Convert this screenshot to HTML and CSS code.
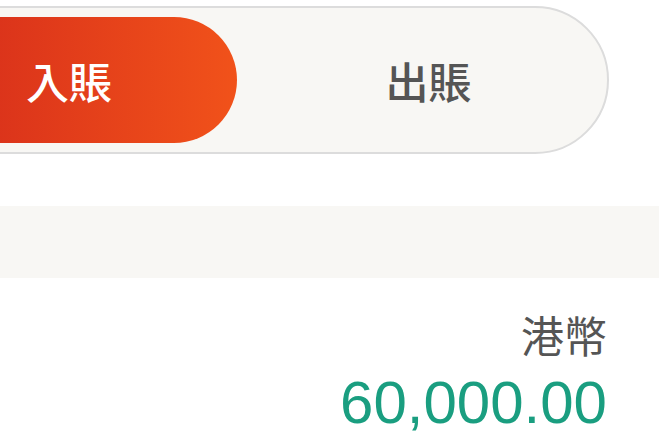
FILE: index.html
```html
<!DOCTYPE html>
<html>
<head>
  <meta charset="utf-8">
  <link rel="stylesheet" href="styles.css">
</head>
<body>

<!-- 入賬 / 出賬 切換 -->
<div class="switch">
  <div class="seg seg-active">入賬</div>
  <div class="seg seg-idle">出賬</div>
</div>

<div class="band"></div>

<div class="summary">
  <div class="currency">港幣</div>
  <div class="amount">60,000.00</div>
</div>

</body>
</html>
```

FILE: styles.css
```css
body {
  margin: 0;
  background: #ffffff;
  font-family: "Noto Sans CJK TC", "Noto Sans", sans-serif;
  overflow: hidden;
}
.switch {
  box-sizing: border-box;
  display: flex;
  width: 719px;
  height: 148px;
  margin: 6px 0 0 -110px;
  padding: 9px;
  border: 2px solid #dcdcdc;
  border-radius: 74px;
  background-color: #f8f7f4;
}
.seg {
  display: flex;
  align-items: center;
  justify-content: center;
  height: 126px;
  font-size: 43px;
  font-weight: 500;
}
.seg-active {
  width: 336px;
  border-radius: 63px;
  background: linear-gradient(to right, #d3281b, #f1521a);
  color: #ffffff;
}
.seg-idle {
  flex: 1;
  padding-left: 22px;
  color: #555555;
}
.band {
  height: 72px;
  margin-top: 52px;
  background-color: #f8f7f4;
}
.summary {
  padding: 30px 52px 0 0;
  text-align: right;
}
.currency {
  font-size: 43px;
  line-height: 52px;
  color: #555555;
}
.amount {
  margin-top: 9px;
  font-family: "Liberation Sans", Arial, sans-serif;
  font-size: 60px;
  line-height: 68px;
  color: #1a9e80;
}
```
